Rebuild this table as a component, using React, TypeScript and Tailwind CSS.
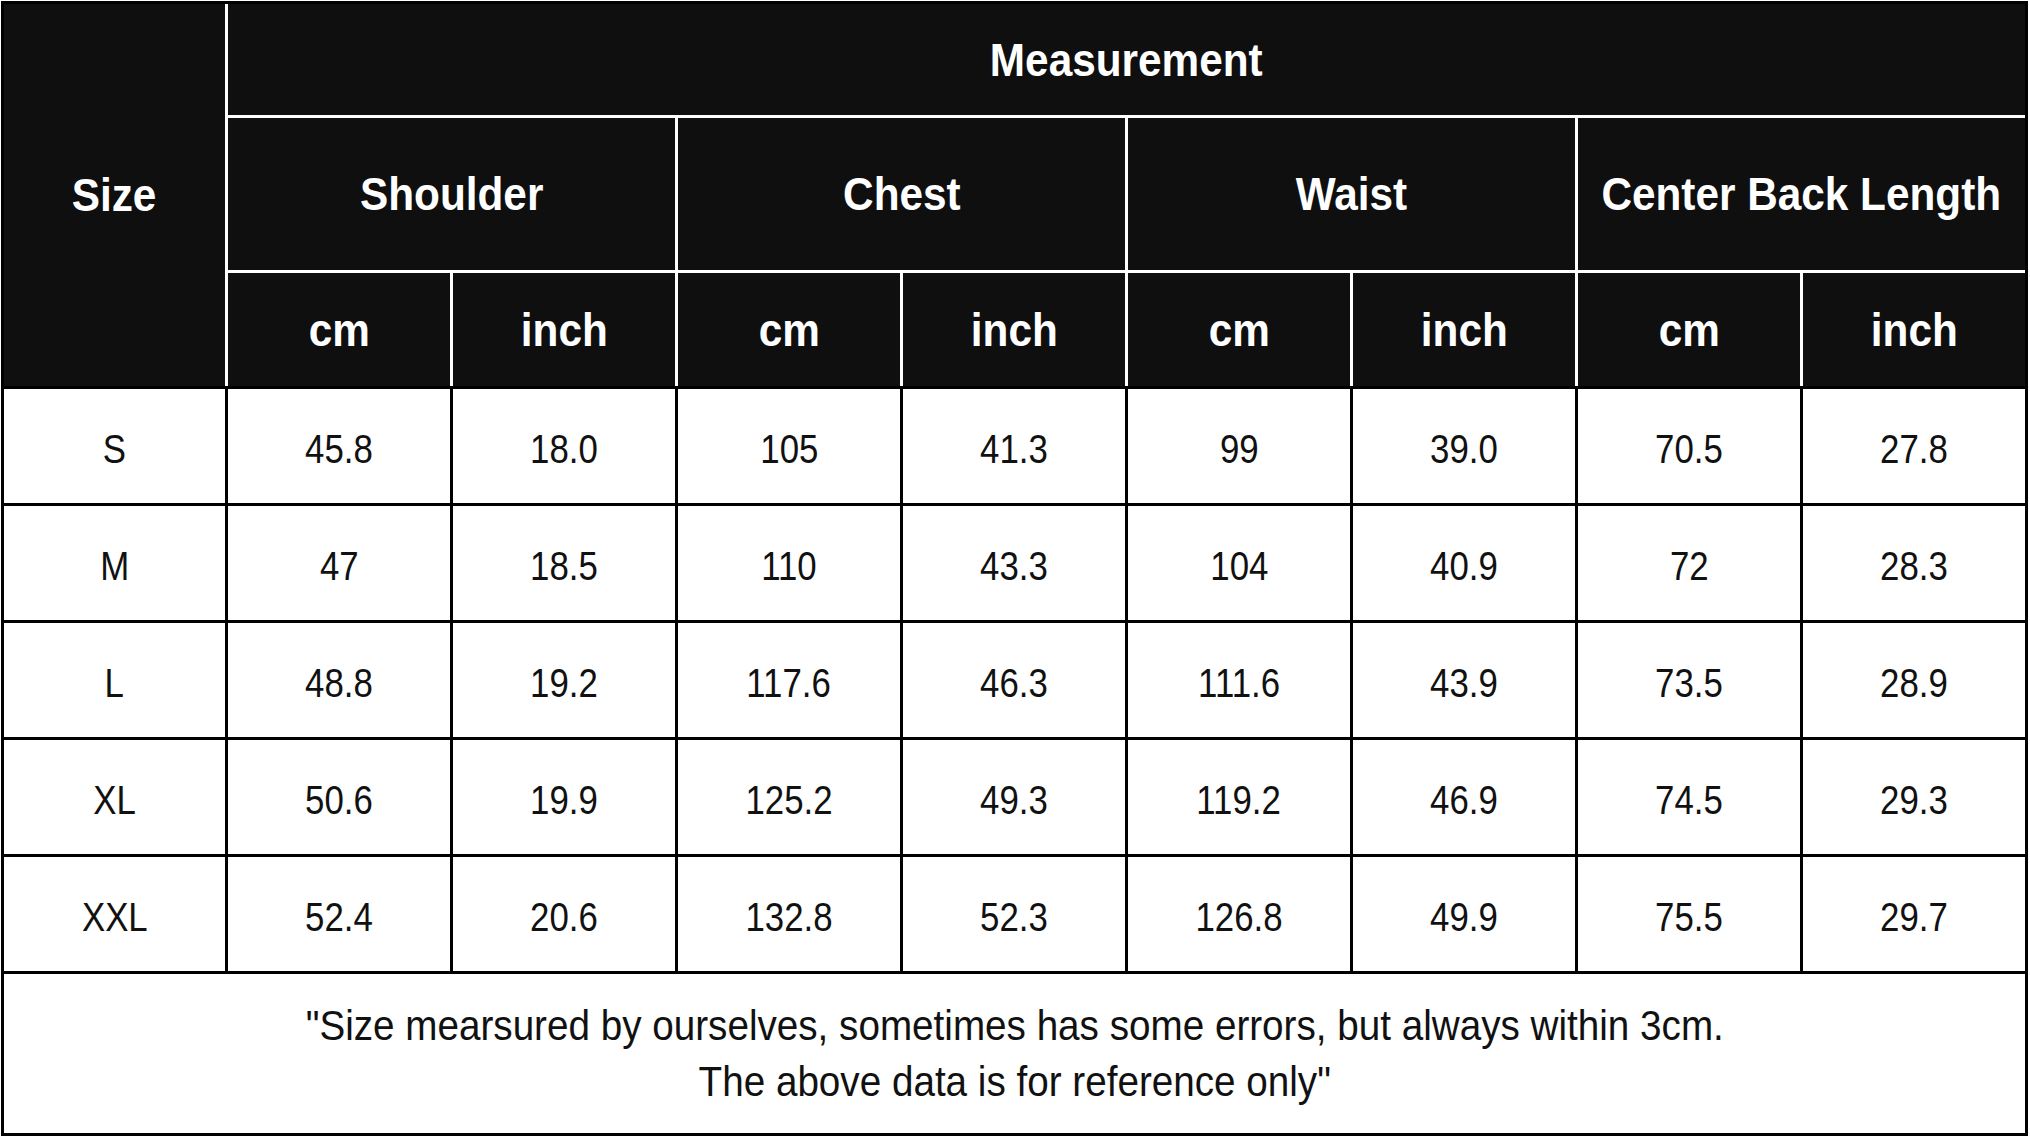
import React from 'react';

const groups = ['Shoulder', 'Chest', 'Waist', 'Center Back Length'];

const rows = [
  ['S', '45.8', '18.0', '105', '41.3', '99', '39.0', '70.5', '27.8'],
  ['M', '47', '18.5', '110', '43.3', '104', '40.9', '72', '28.3'],
  ['L', '48.8', '19.2', '117.6', '46.3', '111.6', '43.9', '73.5', '28.9'],
  ['XL', '50.6', '19.9', '125.2', '49.3', '119.2', '46.9', '74.5', '29.3'],
  ['XXL', '52.4', '20.6', '132.8', '52.3', '126.8', '49.9', '75.5', '29.7'],
];

const HeadText = ({ children }: { children: React.ReactNode }) => (
  <span className="inline-block scale-x-[0.92] text-[46px] leading-none font-bold text-white whitespace-nowrap">
    {children}
  </span>
);

const App = () => {
  return (
    <div className="min-h-screen bg-white font-['Liberation_Sans',Arial,sans-serif]">
      <div className="ml-[1px] mt-[1px] w-[2027px] flex flex-col gap-[3px] bg-black p-[3px]">
        {/* header */}
        <div className="grid grid-cols-[221px_repeat(8,222px)] grid-rows-[111px_152px_113px] gap-[3px] bg-white">
          <div className="row-span-3 flex items-center justify-center bg-[#0f0f0f]">
            <HeadText>Size</HeadText>
          </div>
          <div className="col-span-8 flex items-center justify-center bg-[#0f0f0f]">
            <HeadText>Measurement</HeadText>
          </div>
          {groups.map((g) => (
            <div key={g} className="col-span-2 flex items-center justify-center bg-[#0f0f0f]">
              <HeadText>{g}</HeadText>
            </div>
          ))}
          {groups.map((g) => (
            <React.Fragment key={g + '-u'}>
              <div className="flex items-center justify-center bg-[#0f0f0f]">
                <HeadText>cm</HeadText>
              </div>
              <div className="flex items-center justify-center bg-[#0f0f0f]">
                <HeadText>inch</HeadText>
              </div>
            </React.Fragment>
          ))}
        </div>

        {/* body */}
        <div className="grid grid-cols-[221px_repeat(8,222px)] auto-rows-[114px] gap-[3px] bg-black">
          {rows.map((r) =>
            r.map((v, i) => (
              <div key={r[0] + i} className="flex items-center justify-center bg-white pt-[5px]">
                <span className="inline-block scale-x-[0.87] text-[40px] leading-none text-[#111]">{v}</span>
              </div>
            ))
          )}
        </div>

        {/* note */}
        <div className="h-[159px] flex items-center justify-center bg-white">
          <div className="scale-x-[0.92] text-center text-[42px] leading-[56px] text-[#111] whitespace-nowrap">
            <div>"Size mearsured by ourselves, sometimes has some errors, but always within 3cm.</div>
            <div>The above data is for reference only"</div>
          </div>
        </div>
      </div>
    </div>
  );
};

export default App;
